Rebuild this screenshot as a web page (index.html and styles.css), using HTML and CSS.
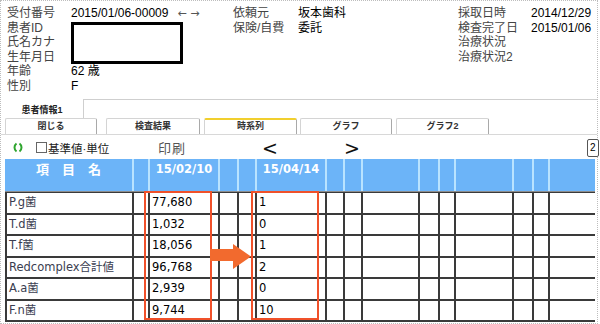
FILE: index.html
```html
<!DOCTYPE html>
<html lang="ja">
<head>
    <meta charset="UTF-8">
    <title>時系列</title>
    <link rel="stylesheet" href="styles.css">
</head>
<body>
<div class="frame">
    <!-- 受付・患者情報 -->
    <div class="info">
        <div class="info-col col-a">
            <span class="lbl">受付番号</span><span class="val">2015/01/06-00009<span class="nav-arrows">← →</span></span>
            <span class="lbl">患者ID</span><span class="redact"></span>
            <span class="lbl">氏名カナ</span>
            <span class="lbl">生年月日</span>
            <span class="lbl">年齢</span><span class="val">62 歳</span>
            <span class="lbl">性別</span><span class="val">F</span>
        </div>
        <div class="info-col col-b">
            <span class="lbl">依頼元</span><span class="val">坂本歯科</span>
            <span class="lbl">保険/自費</span><span class="val">委託</span>
        </div>
        <div class="info-col col-c">
            <span class="lbl">採取日時</span><span class="val">2014/12/29</span>
            <span class="lbl">検査完了日</span><span class="val">2015/01/06</span>
            <span class="lbl">治療状況</span><span class="val"></span>
            <span class="lbl">治療状況2</span><span class="val"></span>
        </div>
    </div>

    <div class="tabs-top">
        <div class="tab-patient">患者情報1</div>
        <div class="tabs-top-rest"></div>
    </div>

    <div class="tabs">
        <div class="tab tab-close">閉じる</div>
        <div class="tab tab-result">検査結果</div>
        <div class="tab tab-series active">時系列</div>
        <div class="tab tab-graph">グラフ</div>
        <div class="tab tab-graph2">グラフ2</div>
    </div>

    <div class="toolbar">
        <div class="tb-left">
            <svg class="reload-icon" width="10" height="11" viewBox="0 0 10 11">
                <path d="M3.5 1.5 A5 5 0 0 0 3.5 9.5" fill="none" stroke="#2fa52f" stroke-width="2"/>
                <path d="M6.5 1.5 A5 5 0 0 1 6.5 9.5" fill="none" stroke="#2fa52f" stroke-width="2"/>
            </svg>
            <span class="checkbox"></span>
            <span class="check-label">基準値·単位</span>
        </div>
        <div class="tb-print">印刷</div>
        <div class="tb-prev">&lt;</div>
        <div class="tb-next">&gt;</div>
        <div class="page-box">2</div>
    </div>

    <div class="grid-wrap">
        <div class="grid-head">
            <div class="hcell h-name">項　目　名</div>
            <div class="hcell"></div>
            <div class="hcell h-date">15/02/10</div>
            <div class="hcell"></div>
            <div class="hcell"></div>
            <div class="hcell h-date">15/04/14</div>
            <div class="hcell"></div>
            <div class="hcell"></div>
            <div class="hcell"></div>
            <div class="hcell"></div>
            <div class="hcell"></div>
            <div class="hcell"></div>
            <div class="hcell"></div>
            <div class="hcell"></div>
            <div class="hcell"></div>
        </div>
        <div class="grid-body">
            <div class="cell name">P.g菌</div><div class="cell"></div><div class="cell num">77,680</div><div class="cell"></div><div class="cell"></div><div class="cell num">1</div><div class="cell"></div><div class="cell"></div><div class="cell"></div><div class="cell"></div><div class="cell"></div><div class="cell"></div><div class="cell"></div><div class="cell"></div><div class="cell"></div>
            <div class="cell name">T.d菌</div><div class="cell"></div><div class="cell num">1,032</div><div class="cell"></div><div class="cell"></div><div class="cell num">0</div><div class="cell"></div><div class="cell"></div><div class="cell"></div><div class="cell"></div><div class="cell"></div><div class="cell"></div><div class="cell"></div><div class="cell"></div><div class="cell"></div>
            <div class="cell name">T.f菌</div><div class="cell"></div><div class="cell num">18,056</div><div class="cell"></div><div class="cell"></div><div class="cell num">1</div><div class="cell"></div><div class="cell"></div><div class="cell"></div><div class="cell"></div><div class="cell"></div><div class="cell"></div><div class="cell"></div><div class="cell"></div><div class="cell"></div>
            <div class="cell name">Redcomplex合計値</div><div class="cell"></div><div class="cell num">96,768</div><div class="cell"></div><div class="cell"></div><div class="cell num">2</div><div class="cell"></div><div class="cell"></div><div class="cell"></div><div class="cell"></div><div class="cell"></div><div class="cell"></div><div class="cell"></div><div class="cell"></div><div class="cell"></div>
            <div class="cell name">A.a菌</div><div class="cell"></div><div class="cell num">2,939</div><div class="cell"></div><div class="cell"></div><div class="cell num">0</div><div class="cell"></div><div class="cell"></div><div class="cell"></div><div class="cell"></div><div class="cell"></div><div class="cell"></div><div class="cell"></div><div class="cell"></div><div class="cell"></div>
            <div class="cell name">F.n菌</div><div class="cell"></div><div class="cell num">9,744</div><div class="cell"></div><div class="cell"></div><div class="cell num">10</div><div class="cell"></div><div class="cell"></div><div class="cell"></div><div class="cell"></div><div class="cell"></div><div class="cell"></div><div class="cell"></div><div class="cell"></div><div class="cell"></div>
        </div>

        <!-- 比較ハイライト -->
        <div class="highlight hl-first"></div>
        <div class="highlight hl-second"></div>
        <svg class="move-arrow" width="41" height="25" viewBox="0 0 41 25">
            <path d="M0 5H23V0L41 12.5L23 25V17H0Z" fill="#f26a2e"/>
        </svg>
    </div>
</div>
</body>
</html>
```

FILE: styles.css
```css
body {
    margin: 0;
    width: 600px;
    height: 324px;
    overflow: hidden;
    background: #fff;
    color: #000;
    font-family: "Liberation Sans", "Noto Sans CJK JP", sans-serif;
}

.frame {
    box-sizing: border-box;
    width: 598px;
    height: 324px;
    border: 1px dotted #bdbdbd;
}

/* 患者情報 */
.info {
    box-sizing: border-box;
    height: 98px;
    padding: 5px 0 0 6px;
    display: flex;
    font-size: 12px;
}

.info-col {
    display: grid;
    grid-auto-rows: 14.5px;
    align-items: center;
    line-height: 14.5px;
}

.col-a {
    width: 226px;
    grid-template-columns: 64px 162px;
}

.col-b {
    width: 225px;
    grid-template-columns: 65px 160px;
}

.col-c {
    grid-template-columns: 73px auto;
}

.lbl {
    grid-column: 1;
    color: #444;
    white-space: nowrap;
}

.val {
    grid-column: 2;
    white-space: nowrap;
}

.nav-arrows {
    margin-left: 9px;
    color: #555;
    font-size: 11px;
    font-family: "DejaVu Sans", sans-serif;
}

.redact {
    grid-column: 2;
    grid-row: 2 / span 3;
    align-self: start;
    box-sizing: border-box;
    width: 112px;
    height: 42px;
    margin-top: 1px;
    border: 3px solid #000;
}

/* タブ */
.tabs-top {
    display: flex;
    height: 19px;
}

.tab-patient {
    box-sizing: border-box;
    width: 82px;
    padding-top: 2px;
    display: flex;
    align-items: center;
    justify-content: center;
    font-size: 9px;
    font-weight: bold;
    color: #222;
}

.tabs-top-rest {
    flex: 1;
    border-left: 1px solid #cfcfcf;
    border-top: 1px solid #cfcfcf;
}

.tabs {
    box-sizing: border-box;
    display: flex;
    height: 17px;
    border-bottom: 1px solid #d8d8d8;
}

.tab {
    box-sizing: border-box;
    height: 16px;
    border: 1px solid #d4d4d4;
    border-right-color: #a9a9a9;
    border-bottom: none;
    border-radius: 2px 2px 0 0;
    font-size: 9px;
    font-weight: bold;
    line-height: 14px;
    text-align: center;
    color: #333;
}

.tab.active {
    border-top: 2px solid #f1cf2e;
    line-height: 13px;
    background: #fff;
}

.tab-close { margin-left: 4px; width: 92px; }
.tab-result { margin-left: 9px; width: 94px; }
.tab-series { margin-left: 4px; width: 93px; }
.tab-graph { margin-left: 3px; width: 92px; }
.tab-graph2 { margin-left: 4px; width: 93px; }

/* ツールバー */
.toolbar {
    display: flex;
    align-items: center;
    height: 23px;
    padding-top: 1px;
}

.tb-left {
    width: 157px;
    display: flex;
    align-items: center;
}

.reload-icon {
    margin-left: 12px;
}

.checkbox {
    box-sizing: border-box;
    width: 11px;
    height: 11px;
    margin-left: 13px;
    border: 1px solid #666;
    background: #fff;
}

.check-label {
    margin-left: 1px;
    font-size: 11.5px;
    color: #222;
}

.tb-print {
    width: 104px;
    font-size: 13px;
    letter-spacing: 1px;
    color: #555;
}

.tb-prev,
.tb-next {
    width: 82px;
    font-family: "DejaVu Sans", sans-serif;
    font-size: 19px;
    line-height: 20px;
    color: #111;
}

.page-box {
    box-sizing: border-box;
    width: 12px;
    height: 18px;
    margin-left: auto;
    margin-right: -2px;
    padding-left: 2px;
    border: 1px solid #555;
    border-radius: 2px;
    font-size: 10px;
    line-height: 16px;
    background: #fff;
}

/* 時系列グリッド */
.grid-wrap {
    position: relative;
    width: 590px;
    margin-left: 4px;
}

.grid-head {
    display: grid;
    grid-template-columns: 127px 14px 68px 17px 16px 68px 16px 16px 55px 18px 14px 56px 18px 14px 45px;
    column-gap: 2px;
    height: 32px;
    background: #b9e3ff;
}

.hcell {
    background: #6cb4f8;
    color: #fff;
    font-weight: bold;
    text-align: center;
    padding-top: 3px;
    line-height: 14px;
    white-space: nowrap;
}

.h-name {
    font-size: 13px;
    font-family: "Noto Sans CJK JP", sans-serif;
}

.h-date {
    font-size: 11.5px;
    font-family: "DejaVu Sans", sans-serif;
}

.grid-body {
    display: grid;
    grid-template-columns: 125px 14px 68px 17px 16px 68px 16px 16px 55px 18px 14px 56px 18px 14px 45px;
    grid-template-rows: repeat(3, 20px 19px);
    gap: 2px;
    padding: 2px 0 2px 2px;
    background: #3a3a3a;
    box-shadow: inset 0 1px 0 #8c8c8c;
}

.cell {
    background: #fff;
    font-family: "DejaVu Sans", "Noto Sans CJK JP", sans-serif;
    font-size: 11.5px;
    line-height: 19px;
    padding-left: 2px;
    white-space: nowrap;
    overflow: hidden;
}

.cell.name {
    color: #3a3d50;
}

.cell.num {
    color: #000;
}

.highlight {
    position: absolute;
    top: 32px;
    width: 68px;
    height: 129px;
    box-sizing: border-box;
    border: 2px solid #f0512a;
}

.hl-first { left: 139px; }
.hl-second { left: 246px; }

.move-arrow {
    position: absolute;
    left: 205px;
    top: 85px;
}
```
